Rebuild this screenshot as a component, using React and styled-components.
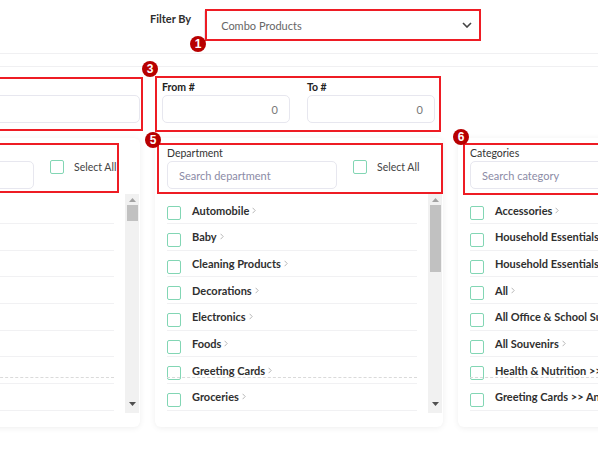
import React from 'react';
import styled, { createGlobalStyle } from 'styled-components';

const GlobalStyle = createGlobalStyle`
  html, body { margin: 0; padding: 0; background: #fff; }
  body {
    font-family: Lato, "Noto Sans", sans-serif;
    width: 598px;
    height: 460px;
    overflow: hidden;
    color: #333;
  }
  * { box-sizing: border-box; }
`;

const Page = styled.div`
  position: relative;
  width: 598px;
  height: 460px;
  overflow: hidden;
  background: #fff;
`;

const Header = styled.header`
  display: flex;
  align-items: flex-start;
  gap: 13px;
  height: 54px;
  padding: 9px 0 0 150px;
  border-bottom: 1px solid #f0f0f2;
`;

const FilterLabel = styled.span`
  margin-top: 3px;
  font-size: 11px;
  font-weight: 700;
  line-height: 14px;
  color: #2e2e2e;
`;

const Select = styled.div`
  width: 276px;
  height: 32px;
  display: flex;
  align-items: center;
  justify-content: space-between;
  padding: 0 7px 0 16px;
  border: 1px solid #e6e6ec;
  border-radius: 3px;
  font-size: 11px;
  color: #666;
`;

const Body = styled.main`
  margin-top: 12px;
  margin-left: -148px;
  border-top: 1px solid #f0f0f2;
  padding-top: 13px;
  display: grid;
  grid-template-columns: repeat(3, 288px);
  column-gap: 15px;
  row-gap: 15px;
`;

const RangeCell = styled.div`
  display: flex;
  gap: 17px;
  padding: 0 ${p => p.$pr || 0}px 0 ${p => p.$pl || 0}px;
`;

const Field = styled.div`
  display: flex;
  flex-direction: column;
  gap: 1px;
  width: ${p => (p.$w ? `${p.$w}px` : '100%')};
`;

const FieldLabel = styled.label`
  font-size: 10.5px;
  font-weight: 700;
  line-height: 14px;
  min-height: 14px;
  color: #222;
`;

const NumberBox = styled.div`
  height: 28px;
  border: 1px solid #e7e7ef;
  border-radius: 5px;
  display: flex;
  align-items: center;
  justify-content: flex-end;
  padding: 0 11px;
  font-size: 11px;
  color: #777;
`;

const Card = styled.section`
  background: #fff;
  border-radius: 6px;
  box-shadow: 0 1px 6px rgba(0, 0, 0, 0.07);
  padding: 8px 1px 14px 12px;
  display: flex;
  flex-direction: column;
`;

const CardHead = styled.div`
  display: flex;
  align-items: flex-start;
  gap: 16px;
`;

const SearchGroup = styled.div`
  display: flex;
  flex-direction: column;
  width: 170px;
  flex: none;
`;

const GroupLabel = styled.span`
  font-size: 10.5px;
  line-height: 15px;
  min-height: 15px;
  color: #333;
`;

const SearchBox = styled.div`
  height: 28px;
  border: 1px solid #e7e7ef;
  border-radius: 5px;
  display: flex;
  align-items: center;
  padding: 0 11px;
  font-size: 11px;
  color: #8b8ba6;
  white-space: nowrap;
`;

const SelectAll = styled.div`
  margin-top: 14px;
  display: flex;
  align-items: center;
  gap: 10px;
  font-size: 10.5px;
  color: #444;
  white-space: nowrap;
`;

const Check = styled.span`
  flex: none;
  width: 14px;
  height: 14px;
  border: 1.5px solid #82d6b4;
  border-radius: 2px;
  background: #fff;
  margin-top: ${p => p.$drop || 0}px;
`;

const ListArea = styled.div`
  margin-top: 5px;
  height: 219px;
  display: flex;
  gap: 11px;
`;

const Rows = styled.ul`
  list-style: none;
  margin: 0;
  padding: 3.4px 0 0;
  width: 250px;
  flex: none;
  overflow: hidden;
`;

const Row = styled.li`
  position: relative;
  height: 26.67px;
  display: flex;
  align-items: center;
  gap: 11px;
  border-bottom: 1px solid #f1f1f3;
  white-space: nowrap;
  &::after {
    content: '';
    display: ${p => (p.$marked ? 'block' : 'none')};
    position: absolute;
    left: 0;
    right: 0;
    bottom: 5px;
    border-top: 1px dashed #dadada;
  }
`;

const ItemText = styled.span`
  display: inline-flex;
  align-items: center;
  gap: 3px;
  font-size: 11px;
  font-weight: 700;
  color: #2f2f2f;
`;

const Scrollbar = styled.div`
  width: 14px;
  flex: none;
  background: #f1f1f1;
  display: flex;
  flex-direction: column;
  align-items: center;
`;

const ArrowBtn = styled.div`
  height: 11px;
  width: 100%;
  display: flex;
  align-items: center;
  justify-content: center;
  margin-top: ${p => (p.$down ? 'auto' : '0')};
  margin-bottom: ${p => (p.$down ? '4px' : '0')};
`;

const Thumb = styled.div`
  width: 11px;
  background: #c1c1c1;
  height: ${p => p.$h}px;
`;

const Annotations = styled.div`
  position: absolute;
  inset: 0;
  pointer-events: none;
`;

const Mark = styled.div`
  position: absolute;
  border: 2px solid #ee1c24;
`;

const Badge = styled.div`
  position: absolute;
  width: 16px;
  height: 16px;
  border-radius: 50%;
  background: #b80000;
  color: #fff;
  font-family: "Liberation Sans", Arial, sans-serif;
  font-weight: 700;
  font-size: 12px;
  line-height: 16px;
  text-align: center;
`;

const Chevron = () => (
  <svg width="10" height="6" viewBox="0 0 10 6">
    <polyline points="1,1 5,5 9,1" fill="none" stroke="#444" strokeWidth="1.6" />
  </svg>
);

const SmallArrow = () => (
  <svg width="4" height="7" viewBox="0 0 4 7">
    <polyline points="0.6,0.8 3.2,3.5 0.6,6.2" fill="none" stroke="#b0b0b0" strokeWidth="0.9" />
  </svg>
);

const Tri = ({ down }) => (
  <svg width="7" height="4" viewBox="0 0 7 4">
    {down ? (
      <polygon points="0,0 7,0 3.5,4" fill="#505050" />
    ) : (
      <polygon points="0,4 7,4 3.5,0" fill="#a3a3a3" />
    )}
  </svg>
);

const FakeScroll = ({ thumb }) => (
  <Scrollbar>
    <ArrowBtn><Tri /></ArrowBtn>
    <Thumb $h={thumb} />
    <ArrowBtn $down><Tri down /></ArrowBtn>
  </Scrollbar>
);

const departments = [
  'Automobile', 'Baby', 'Cleaning Products', 'Decorations', 'Electronics', 'Foods',
  'Greeting Cards', 'Groceries',
];

const categories = [
  { t: 'Accessories', arrow: true },
  { t: 'Household Essentials >> Cleaning Supplies' },
  { t: 'Household Essentials >> Paper Goods' },
  { t: 'All', arrow: true },
  { t: 'All Office & School Supplies', arrow: true },
  { t: 'All Souvenirs', arrow: true },
  { t: 'Health & Nutrition >> Vitamins' },
  { t: 'Greeting Cards >> Anniversary' },
];

/* the first column lies mostly off-screen: its rows show only their separators */
const hiddenRows = Array.from({ length: 9 }, () => ({ t: '' }));

const ItemList = ({ items }) => (
  <Rows>
    {items.map((it, i) => (
      <Row key={i} $marked={i === 6}>
        <Check $drop={6} />
        {it.t && (
          <ItemText>
            {it.t}
            {it.arrow && <SmallArrow />}
          </ItemText>
        )}
      </Row>
    ))}
  </Rows>
);

const FilterCard = ({ label, placeholder, items, scroll }) => (
  <Card>
    <CardHead>
      <SearchGroup>
        <GroupLabel>{label}</GroupLabel>
        <SearchBox>{placeholder}</SearchBox>
      </SearchGroup>
      <SelectAll>
        <Check />
        Select All
      </SelectAll>
    </CardHead>
    <ListArea>
      <ItemList items={items} />
      {scroll && <FakeScroll thumb={scroll} />}
    </ListArea>
  </Card>
);

export default function App() {
  return (
    <Page>
      <GlobalStyle />
      <Header>
        <FilterLabel>Filter By</FilterLabel>
        <Select>
          Combo Products
          <Chevron />
        </Select>
      </Header>
      <Body>
        <RangeCell>
          <Field>
            <FieldLabel />
            <NumberBox />
          </Field>
        </RangeCell>
        <RangeCell $pl={7} $pr={8}>
          <Field $w={128}>
            <FieldLabel>From #</FieldLabel>
            <NumberBox>0</NumberBox>
          </Field>
          <Field $w={128}>
            <FieldLabel>To #</FieldLabel>
            <NumberBox>0</NumberBox>
          </Field>
        </RangeCell>
        <RangeCell />
        <FilterCard label="" placeholder="" items={hiddenRows} scroll={16} />
        <FilterCard
          label="Department"
          placeholder="Search department"
          items={departments.map(t => ({ t, arrow: true }))}
          scroll={67}
        />
        <FilterCard label="Categories" placeholder="Search category" items={categories} />
      </Body>
      <Annotations>
        <Mark style={{ left: 205, top: 9, width: 276, height: 32 }} />
        <Badge style={{ left: 190, top: 36 }}>1</Badge>
        <Mark style={{ left: -10, top: 77, width: 153, height: 54 }} />
        <Mark style={{ left: 155, top: 76, width: 286, height: 56 }} />
        <Badge style={{ left: 142, top: 61 }}>3</Badge>
        <Mark style={{ left: -10, top: 143, width: 129, height: 50 }} />
        <Mark style={{ left: 157, top: 143, width: 286, height: 51 }} />
        <Badge style={{ left: 145, top: 132 }}>5</Badge>
        <Mark style={{ left: 463, top: 143, width: 200, height: 52 }} />
        <Badge style={{ left: 453, top: 129 }}>6</Badge>
      </Annotations>
    </Page>
  );
}
